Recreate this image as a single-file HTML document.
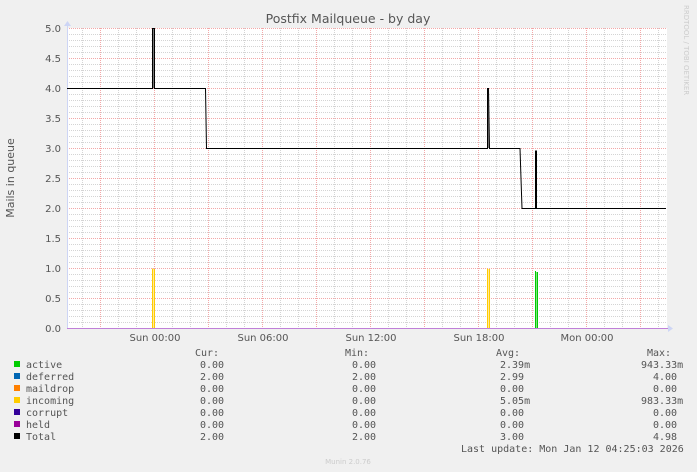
<!DOCTYPE html>
<html><head><style>
html,body{margin:0;padding:0;background:#f0f0f0;}
svg{display:block;}
.m{font-family:"DejaVu Sans Mono","Liberation Mono",monospace;font-size:10px;fill:#555;}
.s{font-family:"DejaVu Sans","Liberation Sans",sans-serif;fill:#555;}
</style></head><body>
<svg width="697" height="472" viewBox="0 0 697 472" xmlns="http://www.w3.org/2000/svg">
<defs>
<pattern id="hg" patternUnits="userSpaceOnUse" x="67" y="28" width="2" height="6"><rect x="0" y="0" width="1" height="1" fill="#d4d4d4"/></pattern>
<pattern id="vg" patternUnits="userSpaceOnUse" x="64" y="28" width="18" height="2"><rect x="0" y="0" width="1" height="1" fill="#d4d4d4"/></pattern>
<pattern id="hr" patternUnits="userSpaceOnUse" x="67" y="28" width="2" height="30"><rect x="0" y="0" width="1" height="1" fill="#f3a8a8"/></pattern>
<pattern id="vr" patternUnits="userSpaceOnUse" x="46" y="28" width="54" height="2"><rect x="0" y="0" width="1" height="1" fill="#f3a8a8"/></pattern>
</defs>
<rect x="67" y="28" width="600" height="300" fill="#fff"/>
<rect x="67" y="28" width="600" height="301" fill="url(#hg)"/>
<rect x="67" y="28" width="600" height="300" fill="url(#vg)"/>
<rect x="67" y="28" width="600" height="301" fill="url(#hr)"/>
<rect x="67" y="28" width="600" height="300" fill="url(#vr)"/>
<line x1="67.5" y1="24" x2="67.5" y2="329" stroke="#cdd5f5" stroke-width="1"/>
<polygon points="64,26 71,26 67.5,21" fill="#cdd5f5"/>
<line x1="67" y1="328.5" x2="670" y2="328.5" stroke="#c080d8" stroke-width="1"/>
<polygon points="668,325 668,332 673,328.5" fill="#cdd5f5"/>
<!-- spikes -->
<rect x="153" y="269" width="2" height="59" fill="#ffe89a"/>
<path d="M152.5 328 V268.5 M154.5 269 V328" fill="none" stroke="#ffcc00" stroke-width="1"/>
<rect x="488" y="269" width="2" height="59" fill="#ffe89a"/>
<path d="M487.5 328 V268.5 M489.5 269 V328" fill="none" stroke="#ffcc00" stroke-width="1"/>
<rect x="536" y="272" width="1" height="56" fill="#80e080"/>
<path d="M535.5 328 V271 M537.5 272 V328" fill="none" stroke="#00cc00" stroke-width="1"/>
<rect x="153" y="29" width="2" height="59" fill="#777"/>
<rect x="488" y="90" width="1" height="58" fill="#777"/>
<rect x="536" y="152" width="1" height="56" fill="#777"/>
<path d="M67 88.5 H152.5 V28.5 H154.5 V88.5 H205.5 L206.5 148.5 H487.5 V88.5 H488.5 L489.5 148.5 H520 L522 208.5 H535.5 V151 H536.5 V208.5 H666" fill="none" stroke="#000" stroke-width="1"/>
<g class="s" font-size="10" text-anchor="end">
<text x="61" y="32">5.0</text><text x="61" y="92">4.0</text><text x="61" y="62">4.5</text>
<text x="61" y="122">3.5</text><text x="61" y="152">3.0</text><text x="61" y="182">2.5</text>
<text x="61" y="212">2.0</text><text x="61" y="242">1.5</text><text x="61" y="272">1.0</text>
<text x="61" y="302">0.5</text><text x="61" y="332">0.0</text>
</g>
<g class="s" font-size="10" text-anchor="middle">
<text x="155" y="341">Sun 00:00</text><text x="263" y="341">Sun 06:00</text>
<text x="371" y="341">Sun 12:00</text><text x="479" y="341">Sun 18:00</text>
<text x="587" y="341">Mon 00:00</text>
</g>
<text class="s" x="348" y="23" font-size="12.5" text-anchor="middle">Postfix Mailqueue - by day</text>
<text class="s" font-size="11" text-anchor="middle" transform="translate(14,178) rotate(-90)">Mails in queue</text>
<text font-family="DejaVu Sans,sans-serif" font-size="7" fill="#ccc" transform="translate(684,5) rotate(90)">RRDTOOL / TOBI OETIKER</text>
<g>
<rect x="14" y="361" width="6" height="6" fill="#00cc00"/>
<rect x="14" y="373" width="6" height="6" fill="#0066b3"/>
<rect x="14" y="385" width="6" height="6" fill="#ff8000"/>
<rect x="14" y="397" width="6" height="6" fill="#ffcc00"/>
<rect x="14" y="409" width="6" height="6" fill="#330099"/>
<rect x="14" y="421" width="6" height="6" fill="#990099"/>
<rect x="14" y="433" width="6" height="6" fill="#000"/>
</g>
<g class="m">
<text x="195" y="356">Cur:</text><text x="345" y="356">Min:</text><text x="496" y="356">Avg:</text><text x="647" y="356">Max:</text>
<text x="26" y="368">active</text><text x="200" y="368">0.00</text><text x="352" y="368">0.00</text><text x="500" y="368">2.39m</text><text x="641" y="368">943.33m</text>
<text x="26" y="380">deferred</text><text x="200" y="380">2.00</text><text x="352" y="380">2.00</text><text x="500" y="380">2.99</text><text x="653" y="380">4.00</text>
<text x="26" y="392">maildrop</text><text x="200" y="392">0.00</text><text x="352" y="392">0.00</text><text x="500" y="392">0.00</text><text x="653" y="392">0.00</text>
<text x="26" y="404">incoming</text><text x="200" y="404">0.00</text><text x="352" y="404">0.00</text><text x="500" y="404">5.05m</text><text x="641" y="404">983.33m</text>
<text x="26" y="416">corrupt</text><text x="200" y="416">0.00</text><text x="352" y="416">0.00</text><text x="500" y="416">0.00</text><text x="653" y="416">0.00</text>
<text x="26" y="428">held</text><text x="200" y="428">0.00</text><text x="352" y="428">0.00</text><text x="500" y="428">0.00</text><text x="653" y="428">0.00</text>
<text x="26" y="440">Total</text><text x="200" y="440">2.00</text><text x="352" y="440">2.00</text><text x="500" y="440">3.00</text><text x="653" y="440">4.98</text>
<text x="461" y="452">Last update: Mon Jan 12 04:25:03 2026</text>
</g>
<text font-family="DejaVu Sans,sans-serif" font-size="7" fill="#ccc" x="348" y="464" text-anchor="middle">Munin 2.0.76</text>
</svg>
</body></html>
